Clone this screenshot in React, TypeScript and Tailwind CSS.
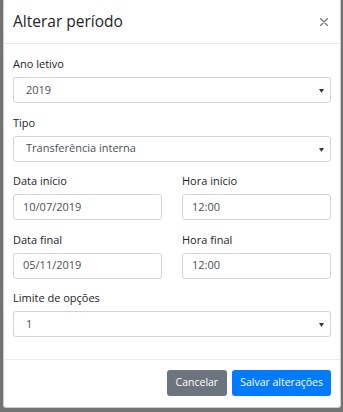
import React from "react";

const font = "font-['Segoe_UI','Open_Sans',sans-serif]";

const Label = ({ children }: { children: React.ReactNode }) => (
  <label className="block text-[11px] leading-[16px] mb-[5px] text-[#212529]">
    {children}
  </label>
);

const Select = ({ value }: { value: string }) => (
  <div className="relative h-[26px] border border-[#ced4da] rounded-[3px] bg-white flex items-center pl-[12px] text-[11px] text-[#495057]">
    {value}
    <svg
      className="absolute right-[6px] top-[11px]"
      width="5"
      height="4"
      viewBox="0 0 5 4"
    >
      <path d="M0 0h5L2.5 4z" fill="#343a40" />
    </svg>
  </div>
);

const Input = ({ value }: { value: string }) => (
  <div className="h-[26px] border border-[#ced4da] rounded-[3px] bg-white flex items-center pl-[9px] text-[11px] text-[#495057]">
    {value}
  </div>
);

const Group = ({
  label,
  children,
}: {
  label: string;
  children: React.ReactNode;
}) => (
  <div className="mb-[11.5px]">
    <Label>{label}</Label>
    {children}
  </div>
);

export default function App() {
  return (
    <div className={`w-[343px] h-[412px] bg-[#737373] overflow-hidden ${font}`}>
      <div className="ml-[3px] w-[338px] h-[408px] bg-white border border-black/20 border-t-0 rounded-b-[3px] flex flex-col">
        {/* header */}
        <div className="h-[44px] border-b border-[#e9ecef] px-[9px] flex items-center justify-between">
          <h5 className="text-[15.5px] font-medium text-[#212529] leading-none mt-[1px]">
            Alterar período
          </h5>
          <button className="mr-[3px] mt-[1px]">
            <svg width="8" height="8" viewBox="0 0 8 8">
              <path
                d="M0.5 0.5L7.5 7.5M7.5 0.5L0.5 7.5"
                stroke="#7a7a7a"
                strokeWidth="1.4"
                strokeLinecap="round"
              />
            </svg>
          </button>
        </div>

        {/* body */}
        <div className="px-[9px] pt-[12px]">
          <Group label="Ano letivo">
            <Select value="2019" />
          </Group>
          <Group label="Tipo">
            <Select value="Transferência interna" />
          </Group>
          <div className="grid grid-cols-2 gap-x-[20px]">
            <Group label="Data início">
              <Input value="10/07/2019" />
            </Group>
            <Group label="Hora início">
              <Input value="12:00" />
            </Group>
            <Group label="Data final">
              <Input value="05/11/2019" />
            </Group>
            <Group label="Hora final">
              <Input value="12:00" />
            </Group>
          </div>
          <Group label="Limite de opções">
            <Select value="1" />
          </Group>
          <div className="h-[10.5px]" />
        </div>

        {/* footer */}
        <div className="border-t border-[#e9ecef] px-[9px] py-[10px] flex justify-end gap-[5px]">
          <button className="h-[26px] px-[9px] rounded-[3px] bg-[#6c757d] text-white text-[10.5px]">
            Cancelar
          </button>
          <button className="h-[26px] px-[8px] rounded-[3px] bg-[#007bff] text-white text-[10.5px]">
            Salvar alterações
          </button>
        </div>
      </div>
    </div>
  );
}
